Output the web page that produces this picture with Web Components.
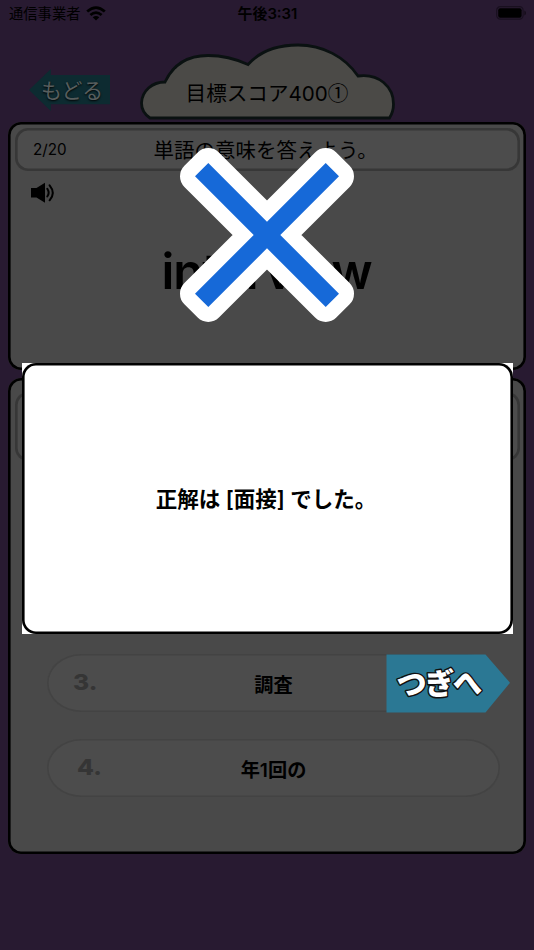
<!DOCTYPE html>
<html lang="ja">
<head>
<meta charset="utf-8">
<title>目標スコア400①</title>
<style>
  body {
    background: #281a31;
    font-family: Inter, "Noto Sans CJK JP", sans-serif;
    height: 950px;
    margin: 0;
    overflow: hidden;
    width: 534px;
  }
</style>
</head>
<body>
<quiz-app></quiz-app>

<script>
const define = (name, html) => {
  const template = document.createElement('template');
  template.innerHTML = html;
  customElements.define(name, class extends HTMLElement {
    constructor() {
      super();
      this.attachShadow({ mode: 'open' });
      this.shadowRoot.appendChild(template.content.cloneNode(true));
    }
  });
};

define('status-bar', `
  <style>
    :host {
      align-items: center;
      box-sizing: border-box;
      color: #000;
      display: grid;
      grid-template-columns: 1fr auto 1fr;
      height: 28px;
      padding: 0 8px 0 9px;
    }
    .carrier {
      align-items: center;
      display: flex;
      font-size: 14.3px;
      gap: 6px;
      line-height: 28px;
    }
    .carrier svg {
      margin-top: -2px;
    }
    .time {
      font-size: 14.9px;
      font-weight: 600;
      line-height: 28px;
    }
    .battery {
      justify-self: end;
      margin-top: -2px;
    }
    svg {
      display: block;
    }
  </style>
  <div class="carrier">
    <span>通信事業者</span>
    <svg width="20" height="15" viewBox="0 0 20 15">
      <g fill="none" stroke="#000" stroke-width="2.7">
        <path d="M1.2 5.6Q10-2.4 18.8 5.6"/>
        <path d="M4.4 9.1Q10 4 15.6 9.1"/>
      </g>
      <path d="M6.7 11.2Q10 8.6 13.3 11.2L10 14.6Z"/>
    </svg>
  </div>
  <span class="time">午後3:31</span>
  <svg class="battery" width="30" height="14" viewBox="0 0 30 14">
    <rect x=".7" y=".7" width="26.4" height="12.4" rx="3.6" fill="none" stroke="#19101f" stroke-width="1.2"/>
    <rect x="2.2" y="2.2" width="23.4" height="9.6" rx="2"/>
    <path d="M28.4 4.6Q30 5.4 30 7T28.4 9.4Z" fill="#150d1a"/>
  </svg>
`);

define('back-button', `
  <style>
    :host {
      display: block;
      height: 42px;
      width: 81px;
    }
    .arrow {
      background: #0d2b31;
      box-sizing: border-box;
      clip-path: polygon(0 50%, 27% 0, 27% 14%, 100% 14%, 100% 84%, 27% 84%, 27% 100%);
      color: #575e5e;
      font-size: 20.9px;
      height: 42px;
      line-height: 43px;
      padding-left: 12px;
      text-shadow: 0 1px 2px #000;
      white-space: nowrap;
    }
  </style>
  <div class="arrow"><slot></slot></div>
`);

define('cloud-title', `
  <style>
    :host {
      display: grid;
      height: 78px;
      width: 256px;
    }
    svg, .title {
      grid-area: 1 / 1;
    }
    .title {
      font-size: 20.6px;
      line-height: 30px;
      padding: 34px 2px 0 0;
      text-align: center;
      white-space: nowrap;
    }
    ::slotted(.mark) {
      font-family: "Noto Sans CJK JP", sans-serif;
    }
  </style>
  <svg width="256" height="78" viewBox="140 43 256 78">
    <path d="M150 118C144 114 141.500 109 141.500 103C142 91 152 82 165 82C173 65 188 55.500 208 55.500C223 55.500 235 58.500 248 64.500C261 50 280 45 298 45C323 45 345 57 358 76C379 73 393.500 87 393.500 104C393.500 109 392 114 389.500 118Z"
      fill="#4b4a47" stroke="#0a1111" stroke-width="2.800"/>
  </svg>
  <div class="title"><slot></slot></div>
`);

define('quiz-panel', `
  <style>
    :host {
      background: #494949;
      border-radius: 13px;
      box-shadow: inset 0 0 0 2.6px #000;
      box-sizing: border-box;
      display: block;
      padding: 6px 6.500px;
    }
  </style>
  <slot></slot>
`);

define('question-bar', `
  <style>
    :host {
      background: #4c4c4c;
      border-radius: 13px;
      box-shadow: inset 0 0 0 2.6px #373737;
      box-sizing: border-box;
      display: grid;
      grid-template-columns: 120.5px 1fr;
      height: 43px;
      line-height: 46px;
      padding: 0 2px 0 18.5px;
    }
    .count {
      font-size: 15.2px;
      line-height: 44px;
    }
    .text {
      font-size: 20.5px;
    }
  </style>
  <span class="count"><slot name="count"></slot></span>
  <span class="text"><slot></slot></span>
`);

define('speaker-icon', `
  <style>
    :host {
      display: block;
      margin: 11px 0 0 15.5px;
    }
    svg {
      display: block;
    }
  </style>
  <svg width="26" height="22" viewBox="0 0 26 22">
    <path d="M1 6H6.500L15 .8V20.800L6.500 15.500H1Z"/>
    <g fill="none" stroke="#000" stroke-width="2" stroke-linecap="round">
      <path d="M17.300 6.800Q20 11 17.300 14.500"/>
      <path d="M19.600 3.300Q26 11 19.600 18.300"/>
    </g>
  </svg>
`);

define('answer-option', `
  <style>
    :host {
      background: #4c4c4c;
      border-radius: 34px / 29px;
      box-shadow: inset 0 0 0 1.6px #434343;
      box-sizing: border-box;
      display: grid;
      grid-template-columns: 1fr auto 1fr;
      height: 58px;
      line-height: 62px;
      width: 453px;
    }
    .number {
      color: #353535;
      font-family: Inter, sans-serif;
      font-size: 22px;
      font-weight: 800;
      line-height: 56px;
      margin-left: var(--indent, 25.5px);
      transform: scaleX(1.12);
      transform-origin: left;
    }
    .label {
      font-size: 19.2px;
      font-weight: 600;
    }
  </style>
  <span class="number"><slot name="number"></slot></span>
  <span class="label"><slot></slot></span>
`);

define('wrong-mark', `
  <style>
    :host {
      display: block;
      height: 176px;
      width: 176px;
    }
    svg {
      display: block;
    }
  </style>
  <svg width="176" height="176" viewBox="-88 -88 176 176">
    <path d="M0-13.300L58.700-72L72-58.700L13.300 0L72 58.700L58.700 72L0 13.300L-58.700 72L-72 58.700L-13.300 0L-72-58.700L-58.700-72Z"
      fill="#1669d8" stroke="#fff" stroke-width="30" stroke-linejoin="round" paint-order="stroke"/>
  </svg>
`);

define('result-dialog', `
  <style>
    :host {
      background: #fff;
      box-sizing: border-box;
      display: block;
      height: 271px;
      width: 491px;
    }
    .frame {
      align-items: center;
      border-radius: 14px;
      box-shadow: inset 0 0 0 2.6px #000;
      box-sizing: border-box;
      display: flex;
      font-size: 21.5px;
      font-weight: 600;
      height: 100%;
      justify-content: center;
      padding: 0 3px 2px 0;
    }
  </style>
  <div class="frame"><span><slot></slot></span></div>
`);

define('next-button', `
  <style>
    :host {
      display: block;
    }
    svg {
      display: block;
    }
    text {
      fill: #fff;
      font-family: "Noto Sans CJK JP", sans-serif;
      font-size: 30px;
      font-weight: 900;
      paint-order: stroke;
      stroke: #101010;
      stroke-linejoin: round;
      stroke-width: 2.8px;
    }
  </style>
  <svg width="124" height="59" viewBox="0 0 124 59">
    <path d="M.5 .5H99.500L124 28.800L99.500 58.500H.5Z" fill="#2b7894"/>
    <text x="12 39.500 66" y="42.500 41.500 39" rotate="-6 -3 4">つぎへ</text>
  </svg>
`);

define('quiz-app', `
  <style>
    :host {
      display: block;
      height: 950px;
      position: relative;
    }
    header {
      align-items: flex-start;
      display: flex;
      height: 94px;
    }
    back-button {
      margin: 41px 30px 0 29px;
    }
    cloud-title {
      margin-top: 15px;
    }
    main {
      display: flex;
      flex-direction: column;
      gap: 8px;
      padding: 0 8px;
    }
    .question {
      height: 248px;
    }
    .word {
      font-size: 49px;
      font-weight: 600;
      letter-spacing: -1.1px;
      line-height: 60px;
      margin-top: 38px;
      padding-right: 1px;
      text-align: center;
    }
    .answers {
      height: 476px;
    }
    .answers question-bar {
      height: 69px;
      margin-top: 8px;
    }
    .options {
      align-items: center;
      display: flex;
      flex-direction: column;
      gap: 27px;
      margin: 193px 0 0 13px;
    }
    .result {
      align-items: center;
      display: flex;
      flex-direction: column;
      inset: 0;
      padding-top: 147px;
      position: absolute;
    }
    result-dialog {
      margin: 40px 0 20px 1px;
    }
    next-button {
      align-self: flex-end;
      margin-right: 24px;
    }
  </style>
  <status-bar></status-bar>
  <header>
    <back-button>もどる</back-button>
    <cloud-title>目標スコア400<span class="mark">①</span></cloud-title>
  </header>
  <main>
    <quiz-panel class="question">
      <question-bar><span slot="count">2/20</span>単語の意味を答えよう。</question-bar>
      <speaker-icon></speaker-icon>
      <div class="word">interview</div>
    </quiz-panel>
    <quiz-panel class="answers">
      <question-bar></question-bar>
      <div class="options">
        <answer-option><span slot="number">3.</span>調査</answer-option>
        <answer-option style="--indent: 29.5px"><span slot="number">4.</span>年1回の</answer-option>
      </div>
    </quiz-panel>
  </main>
  <div class="result">
    <wrong-mark></wrong-mark>
    <result-dialog>正解は [面接] でした。</result-dialog>
    <next-button></next-button>
  </div>
`);
</script>
</body>
</html>
